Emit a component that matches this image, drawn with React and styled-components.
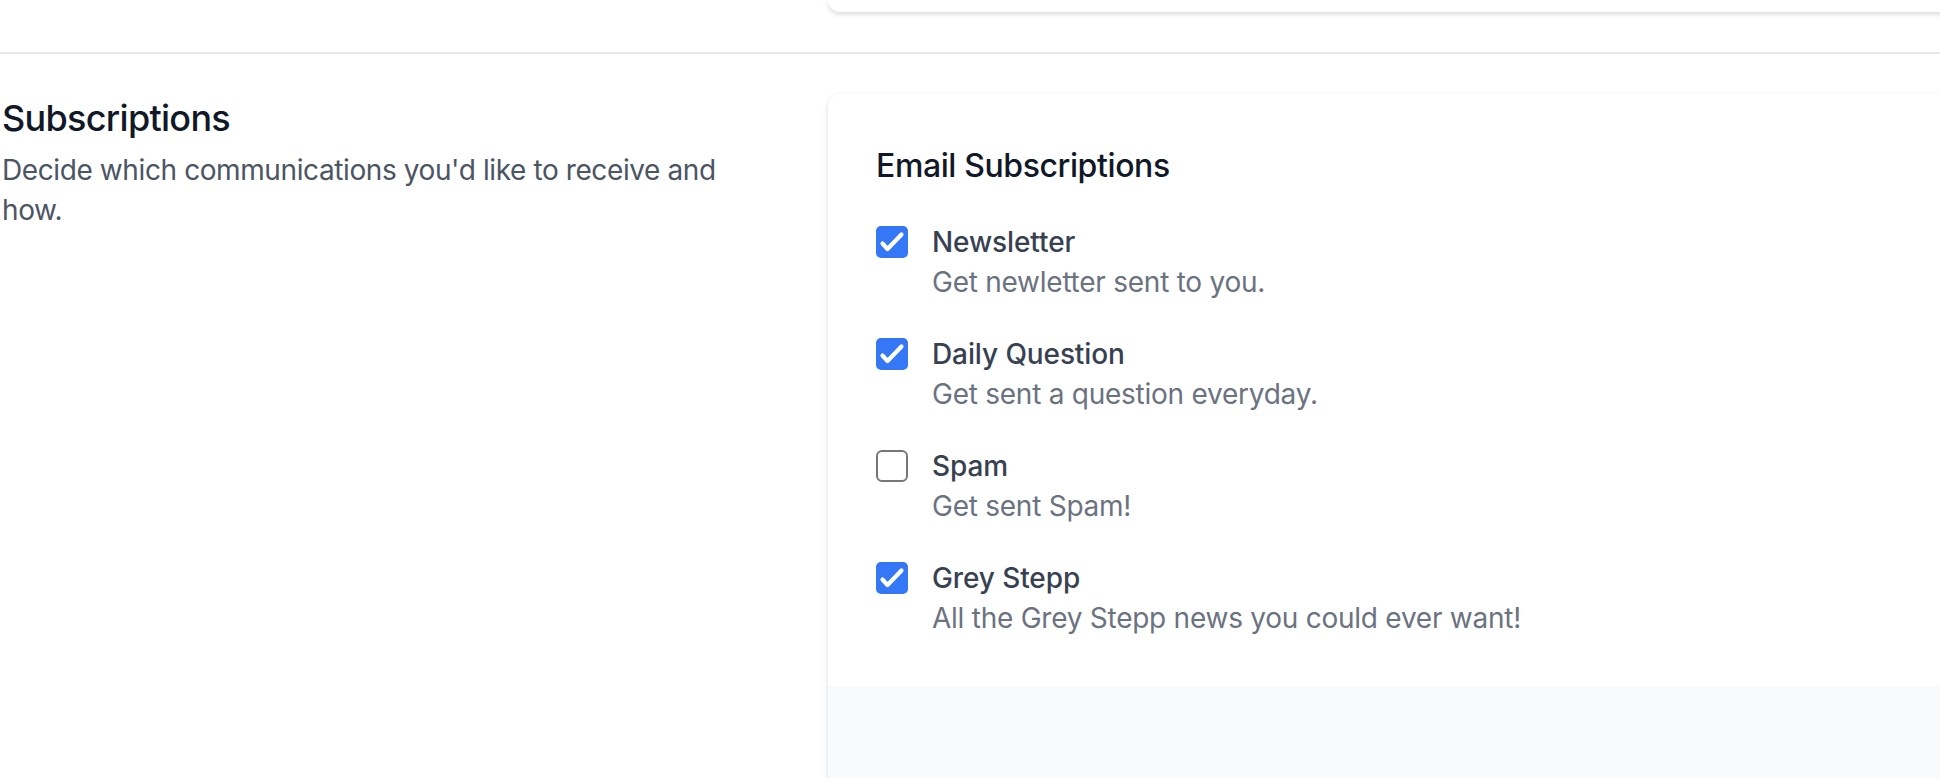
import React, { useState } from "react";
import styled, { createGlobalStyle } from "styled-components";

const Global = createGlobalStyle`
  html, body { margin: 0; padding: 0; background: #ffffff; }
  body {
    font-family: Inter, "Noto Sans", "Liberation Sans", sans-serif;
    -webkit-font-smoothing: antialiased;
    overflow: hidden;
  }
  * { box-sizing: border-box; }
`;

const Page = styled.div`
  width: 1940px;
  height: 778px;
  overflow: hidden;
  background: #ffffff;
  padding-left: 2px;
`;

const Grid = styled.div`
  display: grid;
  grid-template-columns: 778px 1604px;
  column-gap: 48px;
`;

const TopCard = styled.div`
  grid-column: 2;
  height: 12px;
  background: #ffffff;
  border-radius: 0 0 12px 12px;
  box-shadow: 0 2px 6px 0 rgba(0, 0, 0, 0.1), 0 2px 4px 0 rgba(0, 0, 0, 0.06);
`;

const Divider = styled.div`
  padding: 40px 0;
  margin-left: -2px;
  & > div {
    border-top: 2px solid #e5e7eb;
  }
`;

const Intro = styled.div`
  grid-column: 1;
`;

const Heading = styled.h3`
  margin: 0;
  font-size: 36px;
  line-height: 48px;
  font-weight: 500;
  letter-spacing: -0.7px;
  color: #111827;
`;

const Lead = styled.p`
  margin: 8px 0 0;
  font-size: 28px;
  line-height: 40px;
  letter-spacing: -0.4px;
  color: #4b5563;
  max-width: 740px;
`;

const Card = styled.div`
  grid-column: 2;
  background: #ffffff;
  border-radius: 12px;
  overflow: hidden;
  box-shadow: 0 2px 6px 0 rgba(0, 0, 0, 0.1), 0 2px 4px 0 rgba(0, 0, 0, 0.06);
  height: 760px;
  display: flex;
  flex-direction: column;
`;

const CardBody = styled.div`
  padding: 48px;
`;

const Legend = styled.div`
  font-size: 32px;
  line-height: 48px;
  font-weight: 500;
  letter-spacing: -0.4px;
  color: #111827;
`;

const List = styled.div`
  margin-top: 32px;
  display: flex;
  flex-direction: column;
  gap: 32px;
`;

const Item = styled.label`
  display: flex;
  align-items: flex-start;
  cursor: pointer;
`;

const BoxWrap = styled.div`
  height: 40px;
  display: flex;
  align-items: center;
`;

const Box = styled.span`
  width: 32px;
  height: 32px;
  border-radius: ${(p) => (p.$checked ? "5px" : "6px")};
  display: flex;
  background: ${(p) => (p.$checked ? "#3478f6" : "#ffffff")};
  border: ${(p) => (p.$checked ? "none" : "2px solid #767676")};
`;

const Text = styled.div`
  margin-left: 24px;
  font-size: 28px;
  line-height: 40px;
`;

const Label = styled.div`
  font-weight: 500;
  letter-spacing: -0.1px;
  color: #374151;
`;

const Desc = styled.div`
  letter-spacing: -0.25px;
  color: #6b7280;
`;

const Footer = styled.div`
  flex: 1;
  background: #f9fafb;
`;

const Check = () => (
  <svg width="32" height="32" viewBox="0 0 32 32" fill="none">
    <path
      d="M6.5 17.5 L11.5 23 L25.5 8.5"
      stroke="#ffffff"
      strokeWidth="4.2"
      strokeLinecap="round"
      strokeLinejoin="round"
    />
  </svg>
);

const items = [
  { id: "newsletter", label: "Newsletter", desc: "Get newletter sent to you.", on: true },
  { id: "daily", label: "Daily Question", desc: "Get sent a question everyday.", on: true },
  { id: "spam", label: "Spam", desc: "Get sent Spam!", on: false },
  { id: "grey", label: "Grey Stepp", desc: "All the Grey Stepp news you could ever want!", on: true },
];

export default function App() {
  const [state, setState] = useState(
    Object.fromEntries(items.map((i) => [i.id, i.on]))
  );
  return (
    <Page>
      <Global />
      <Grid>
        <TopCard />
      </Grid>
      <Divider>
        <div />
      </Divider>
      <Grid>
        <Intro>
          <Heading>Subscriptions</Heading>
          <Lead>Decide which communications you'd like to receive and how.</Lead>
        </Intro>
        <Card>
          <CardBody>
            <Legend>Email Subscriptions</Legend>
            <List>
              {items.map((it) => (
                <Item
                  key={it.id}
                  onClick={() => setState((s) => ({ ...s, [it.id]: !s[it.id] }))}
                >
                  <BoxWrap>
                    <Box $checked={state[it.id]}>{state[it.id] && <Check />}</Box>
                  </BoxWrap>
                  <Text>
                    <Label>{it.label}</Label>
                    <Desc>{it.desc}</Desc>
                  </Text>
                </Item>
              ))}
            </List>
          </CardBody>
          <Footer />
        </Card>
      </Grid>
    </Page>
  );
}
